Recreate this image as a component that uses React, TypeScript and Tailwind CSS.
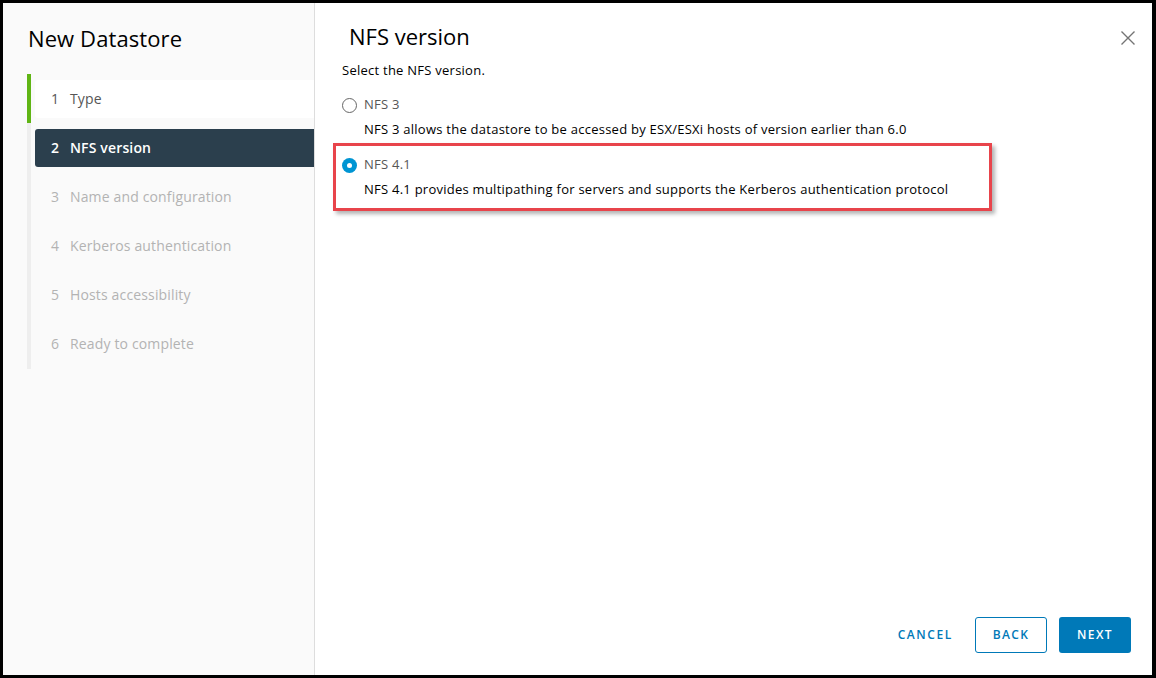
import React from "react";

const steps = [
  { n: 1, label: "Type", state: "done" },
  { n: 2, label: "NFS version", state: "active" },
  { n: 3, label: "Name and configuration", state: "todo" },
  { n: 4, label: "Kerberos authentication", state: "todo" },
  { n: 5, label: "Hosts accessibility", state: "todo" },
  { n: 6, label: "Ready to complete", state: "todo" },
];

export default function App() {
  return (
    <div
      className="w-[1156px] h-[678px] bg-black pt-[3px] pl-[3px] pr-[4px] pb-[3px]"
      style={{ fontFamily: '"Open Sans", "Noto Sans", sans-serif' }}
    >
      <div className="flex h-full w-full bg-white">
        {/* Sidebar */}
        <div className="w-[312px] shrink-0 bg-[#fafafa] border-r border-[#dddddd] pt-[21px]">
          <div className="pl-[25px] text-[22px] leading-[28px] text-[#000] font-normal tracking-[0.1px]">
            New Datastore
          </div>
          <div className="ml-[24px] mt-[22px]">
            {steps.map((s, i) => (
              <div
                key={s.n}
                className={
                  "border-l-4 pl-[4px] pt-[6px] " +
                  (i === steps.length - 1 ? "pb-[6px] " : "pb-[5px] ") +
                  (s.state === "done" ? "border-[#60b515]" : "border-[#eeeeee]")
                }
              >
                <div
                  className={
                    "h-[38px] flex items-center pl-[16px] pb-[2px] text-[14px] tracking-[0.15px] rounded-l-[3px] " +
                    (s.state === "done"
                      ? "bg-white text-[#565656]"
                      : s.state === "active"
                      ? "bg-[#2b3f4d] text-white font-semibold"
                      : "text-[#b3b3b3]")
                  }
                >
                  <span className="w-[19px]">{s.n}</span>
                  <span>{s.label}</span>
                </div>
              </div>
            ))}
          </div>
        </div>

        {/* Content */}
        <div className="flex-1 flex flex-col relative">
          <div className="flex items-start justify-between pl-[34px] pr-[16px] pt-[19px]">
            <div className="text-[22px] leading-[28px] text-[#000]">NFS version</div>
            <button className="mt-[9px] mr-[1px] text-[#747474]" aria-label="Close">
              <svg width="14" height="14" viewBox="0 0 14 14">
                <path d="M0.5 0.5 L13.5 13.5 M13.5 0.5 L0.5 13.5" stroke="currentColor" strokeWidth="1.4" fill="none" />
              </svg>
            </button>
          </div>
          <div className="pl-[27px] pr-[20px] text-[13px] tracking-[0.25px]">
            <div className="leading-[18px] text-[#000] mt-[11px]">Select the NFS version.</div>

            <div className="mt-[16px] flex items-center gap-[7px] h-[20px]">
              <span className="w-[15px] h-[15px] rounded-full border border-[#666] bg-white" />
              <span className="text-[#565656]">NFS 3</span>
            </div>
            <div className="pl-[22px] mt-[5px] leading-[18px] text-[#000]">
              NFS 3 allows the datastore to be accessed by ESX/ESXi hosts of version earlier than 6.0
            </div>

            <div className="relative mt-[17px]">
              <div className="flex items-center gap-[7px] h-[20px]">
                <span className="w-[15px] h-[15px] rounded-full bg-[#0095d3] flex items-center justify-center">
                  <span className="w-[5px] h-[5px] rounded-full bg-white" />
                </span>
                <span className="text-[#565656]">NFS 4.1</span>
              </div>
              <div className="pl-[22px] mt-[5px] leading-[18px] text-[#000]">
                NFS 4.1 provides multipathing for servers and supports the Kerberos authentication protocol
              </div>
              <div className="absolute left-[-9px] top-[-12px] w-[659px] h-[68px] border-[3px] border-[#e8444b] shadow-[3px_3px_4px_rgba(0,0,0,0.3)] pointer-events-none" />
            </div>
          </div>

          <div className="mt-auto flex items-center justify-end gap-[12px] pr-[21px] pb-[22px]">
            <button className="h-[36px] px-[10px] text-[12px] font-semibold tracking-[1.6px] text-[#0079b8]">
              CANCEL
            </button>
            <button className="h-[36px] w-[72px] rounded-[3px] border border-[#0079b8] text-[12px] font-semibold tracking-[1.4px] text-[#0079b8] bg-white">
              BACK
            </button>
            <button className="h-[36px] w-[72px] rounded-[3px] bg-[#0079b8] text-[12px] font-semibold tracking-[1.4px] text-white">
              NEXT
            </button>
          </div>
        </div>
      </div>
    </div>
  );
}
